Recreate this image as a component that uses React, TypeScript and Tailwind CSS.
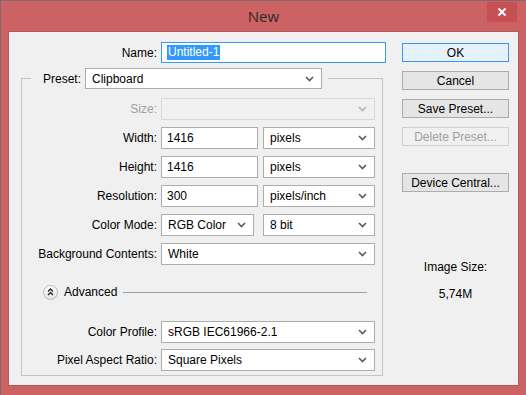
import React from "react";

const font = "font-['Liberation_Sans',Arial,sans-serif]";

const Chevron = ({ disabled = false }: { disabled?: boolean }) => (
  <svg width="9" height="6" viewBox="0 0 9 6" className="shrink-0">
    <path
      d="M1 1 L4.5 4.5 L8 1"
      fill="none"
      stroke={disabled ? "#b4b4b4" : "#5a5a5a"}
      strokeWidth="1.6"
    />
  </svg>
);

const Select = ({
  value,
  width,
  height = "h-[22px]",
  disabled = false,
}: {
  value: string;
  width: string;
  height?: string;
  disabled?: boolean;
}) => (
  <div
    className={`${width} ${height} flex items-center justify-between border pl-[6px] pr-[7px] ${
      disabled ? "border-[#d9d9d9] bg-[#f0f0f0]" : "border-[#acacac] bg-white"
    }`}
  >
    <span className="text-[12px] text-black whitespace-nowrap">{value}</span>
    <Chevron disabled={disabled} />
  </div>
);

const Input = ({ value, width }: { value: string; width: string }) => (
  <div className={`${width} h-[22px] flex items-center border border-[#abadb3] bg-white pl-[5px]`}>
    <span className="text-[12px] text-black">{value}</span>
  </div>
);

const Row = ({
  label,
  children,
  disabled = false,
  className = "",
}: {
  label: string;
  children: React.ReactNode;
  disabled?: boolean;
  className?: string;
}) => (
  <div className={`flex items-center gap-[4px] ${className}`}>
    <span
      className={`w-[135px] text-right text-[12px] whitespace-nowrap ${
        disabled ? "text-[#a0a0a0]" : "text-black"
      }`}
    >
      {label}
    </span>
    {children}
  </div>
);

const Button = ({
  label,
  primary = false,
  disabled = false,
  className = "",
}: {
  label: string;
  primary?: boolean;
  disabled?: boolean;
  className?: string;
}) => (
  <div
    className={`h-[19px] w-[107px] flex items-center justify-center border text-[12px] ${className} ${
      primary
        ? "border-[#3399ff] bg-[#e5f1fb]"
        : disabled
        ? "border-[#d0d0d0] bg-[#f0f0f0] text-[#a0a0a0]"
        : "border-[#acacac] bg-[#e5e5e5]"
    } ${disabled ? "" : "text-black"}`}
  >
    {label}
  </div>
);

export default function App() {
  return (
    <div className={`w-[526px] h-[395px] bg-[#cc6264] border-t border-l border-[#7e6a6a] flex flex-col ${font}`}>
      {/* Title bar */}
      <div className="relative h-[30px] flex items-center justify-center">
        <span className="font-['Open_Sans',sans-serif] text-[15px] text-[#2b2b2b] mt-[1px]">New</span>
        <div className="absolute right-[9px] top-[1px] w-[30px] h-[20px] bg-[#c75054] flex items-center justify-center">
          <svg width="10" height="10" viewBox="0 0 10 10">
            <path d="M1.5 1.5 L8.5 8.5 M8.5 1.5 L1.5 8.5" stroke="#fff" strokeWidth="2" />
          </svg>
        </div>
      </div>

      {/* Client area */}
      <div className="ml-[7px] w-[511px] h-[355px] bg-[#f0f0f0] border border-[#b55a5c] flex">
        {/* Left column */}
        <div className="w-[377px] pt-[10px]">
          <div className="flex items-center gap-[4px]">
            <span className="w-[148px] text-right text-[12px] text-black">Name:</span>
            <div className="w-[225px] h-[21px] flex items-center border border-[#3399ff] bg-white pl-[5px]">
              <span className="text-[12px] text-white bg-[#3399ff] leading-[15px] px-[1px]">Untitled-1</span>
            </div>
          </div>

          <fieldset className="ml-[12px] mt-[5px] w-[362px] border border-[#c4c4c4] pb-[4px] pr-[7px]">
            <legend className="ml-[9px] pl-[12px] pr-[6px] flex items-center gap-[4px]">
              <span className="text-[12px] text-black">Preset:</span>
              <Select value="Clipboard" width="w-[237px]" height="h-[21px]" />
            </legend>

            <div className="flex flex-col gap-[7px] pt-[9px]">
              <Row label="Size:" disabled>
                <Select value="" width="w-[214px]" disabled />
              </Row>
              <Row label="Width:">
                <Input value="1416" width="w-[97px]" />
                <div className="ml-[1px]">
                  <Select value="pixels" width="w-[112px]" />
                </div>
              </Row>
              <Row label="Height:">
                <Input value="1416" width="w-[97px]" />
                <div className="ml-[1px]">
                  <Select value="pixels" width="w-[112px]" />
                </div>
              </Row>
              <Row label="Resolution:">
                <Input value="300" width="w-[97px]" />
                <div className="ml-[1px]">
                  <Select value="pixels/inch" width="w-[112px]" />
                </div>
              </Row>
              <Row label="Color Mode:">
                <Select value="RGB Color" width="w-[93px]" />
                <div className="ml-[5px]">
                  <Select value="8 bit" width="w-[112px]" />
                </div>
              </Row>
              <Row label="Background Contents:">
                <Select value="White" width="w-[214px]" />
              </Row>
            </div>

            {/* Advanced */}
            <div className="mt-[18px] flex items-center pl-[21px]">
              <div className="w-[15px] h-[15px] rounded-full border border-[#b8b8b8] bg-gradient-to-b from-white to-[#e4e4e4] flex items-center justify-center">
                <svg width="7" height="8" viewBox="0 0 7 8">
                  <path d="M1 3.5 L3.5 1 L6 3.5 M1 7 L3.5 4.5 L6 7" fill="none" stroke="#222" strokeWidth="1.3" />
                </svg>
              </div>
              <span className="ml-[6px] text-[12px] text-black">Advanced</span>
              <div className="ml-[6px] w-[244px] h-px bg-[#a0a0a0]" />
            </div>

            <div className="mt-[20px] flex flex-col gap-[6px]">
              <Row label="Color Profile:">
                <Select value="sRGB IEC61966-2.1" width="w-[214px]" />
              </Row>
              <Row label="Pixel Aspect Ratio:">
                <Select value="Square Pixels" width="w-[214px]" />
              </Row>
            </div>
          </fieldset>
        </div>

        {/* Right column */}
        <div className="ml-[16px] w-[107px] pt-[11px] flex flex-col">
          <Button label="OK" primary />
          <Button label="Cancel" className="mt-[9px]" />
          <Button label="Save Preset..." className="mt-[9px]" />
          <Button label="Delete Preset..." disabled className="mt-[9px]" />
          <Button label="Device Central..." className="mt-[27px]" />

          <div className="mt-[66px] flex flex-col items-center gap-[9px] text-[12px] text-black">
            <span>Image Size:</span>
            <span>5,74M</span>
          </div>
        </div>
      </div>
    </div>
  );
}
